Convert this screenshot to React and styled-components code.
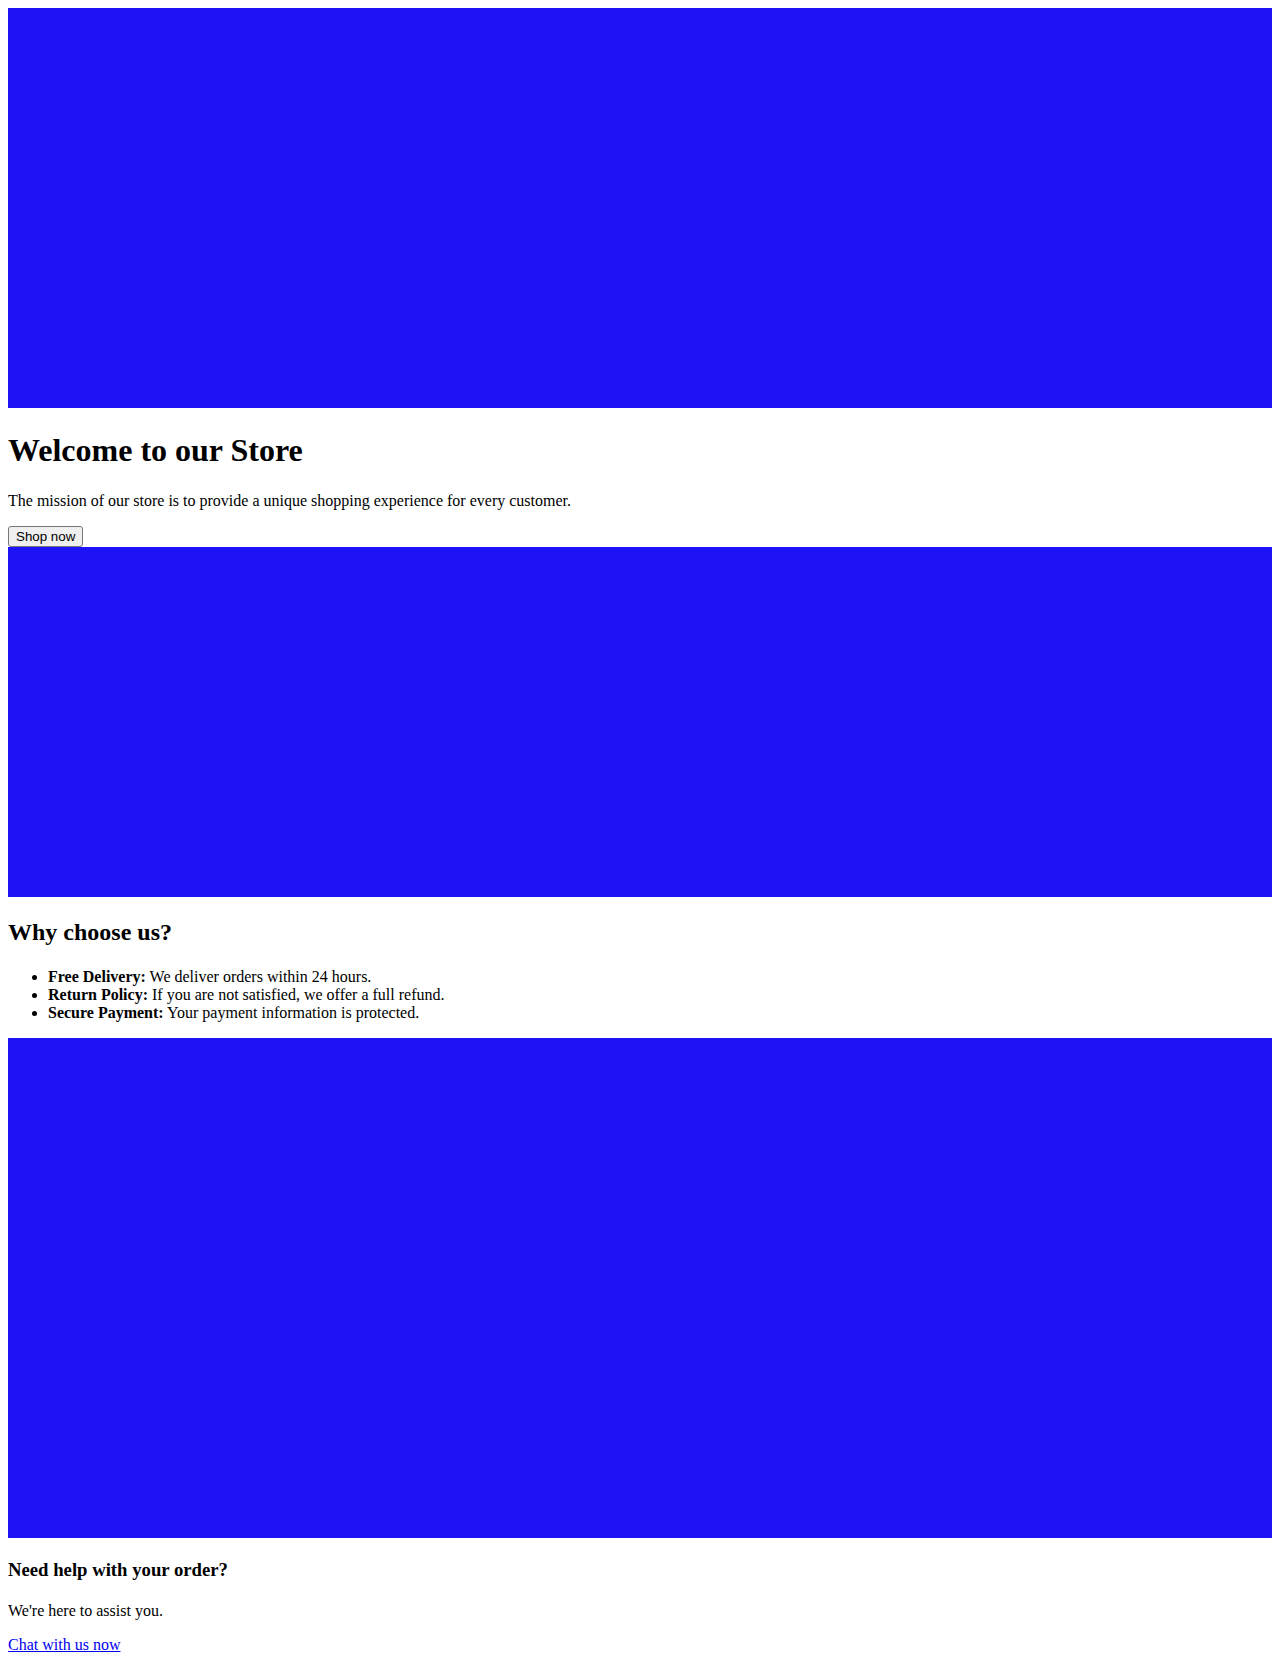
import React from "react";
import styled, { createGlobalStyle } from "styled-components";

const Global = createGlobalStyle`
  html, body { margin: 0; padding: 0; background: #ffffff; }
  body {
    margin: 8px;
    font-family: "Liberation Serif", "Times New Roman", serif;
    font-size: 16px;
    color: #000000;
  }
`;

const Page = styled.main`
  display: block;
`;

const Banner = styled.div`
  display: block;
  width: 100%;
  height: ${(p) => p.$h}px;
  background: #1e12f7;
`;

const Section = styled.section`
  display: block;
`;

const Title = styled.h1`
  font-size: 32px;
  line-height: 41px;
  font-weight: bold;
  margin: 22px 0 21px;
`;

const Subtitle = styled.h2`
  font-size: 24px;
  line-height: 31px;
  font-weight: bold;
  margin: 19.92px 0;
`;

const Small = styled.h3`
  font-size: 18.72px;
  line-height: 26px;
  font-weight: bold;
  margin: 19px 0 18.72px;
`;

const Text = styled.p`
  margin: 16px 0;
`;

const ButtonRow = styled.div`
  display: flex;
`;

const Button = styled.button`
  font-family: "Liberation Sans", Arial, sans-serif;
  font-size: 13.333px;
  line-height: 15px;
  padding: 2px 7px;
  border: 1px solid #767676;
  border-radius: 3px;
  background: #efefef;
  color: #000;
`;

const List = styled.ul`
  margin: 16px 0;
  padding-left: 40px;
  list-style: disc;
`;

const Link = styled.a`
  color: #0000ee;
  text-decoration: underline;
`;

export default function App() {
  return (
    <Page>
      <Global />
      <Banner $h={400} />
      <Section>
        <Title>Welcome to our Store</Title>
        <Text>
          The mission of our store is to provide a unique shopping experience
          for every customer.
        </Text>
        <ButtonRow>
          <Button>Shop now</Button>
        </ButtonRow>
      </Section>
      <Banner $h={350} />
      <Section>
        <Subtitle>Why choose us?</Subtitle>
        <List>
          <li>
            <strong>Free Delivery:</strong> We deliver orders within 24 hours.
          </li>
          <li>
            <strong>Return Policy:</strong> If you are not satisfied, we offer a
            full refund.
          </li>
          <li>
            <strong>Secure Payment:</strong> Your payment information is
            protected.
          </li>
        </List>
      </Section>
      <Banner $h={500} />
      <Section>
        <Small>Need help with your order?</Small>
        <Text>We're here to assist you.</Text>
        <Text>
          <Link href="#">Chat with us now</Link>
        </Text>
      </Section>
    </Page>
  );
}
